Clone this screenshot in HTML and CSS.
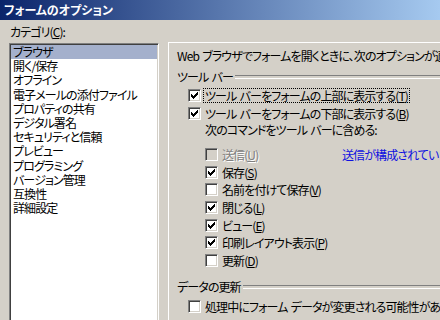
FILE: index.html
```html
<!DOCTYPE html>
<html lang="ja">
<head>
<meta charset="utf-8">
<title>フォームのオプション</title>
<link rel="stylesheet" href="styles.css">
</head>
<body>
<div class="titlebar">フォームのオプション</div>
<div class="main">
  <div class="left">
    <div class="label">カテゴリ(<u>C</u>):</div>
    <div class="list">
      <div class="item sel">ブラウザ</div>
      <div class="item">開く/保存</div>
      <div class="item">オフライン</div>
      <div class="item">電子メールの添付ファイル</div>
      <div class="item">プロパティの共有</div>
      <div class="item">デジタル署名</div>
      <div class="item">セキュリティと信頼</div>
      <div class="item">プレビュー</div>
      <div class="item">プログラミング</div>
      <div class="item">バージョン管理</div>
      <div class="item">互換性</div>
      <div class="item">詳細設定</div>
    </div>
  </div>
  <div class="panel">
    <div class="intro">Web ブラウザでフォームを開くときに、次のオプションが適用されます:</div>
    <div class="group g1"><span>ツール バー</span></div>
    <div class="opt top first">
      <span class="cb"><svg width="11" height="11" viewBox="0 0 11 11" shape-rendering="crispEdges"><path d="M2 4h1v3H2zM3 5h1v3H3zM4 6h1v3H4zM5 5h1v3H5zM6 4h1v3H6zM7 3h1v3H7zM8 2h1v3H8z" fill="#000"/></svg></span>
      <span class="focus">ツール バーをフォームの上部に表示する(<u>T</u>)</span>
    </div>
    <div class="opt top second">
      <span class="cb"><svg width="11" height="11" viewBox="0 0 11 11" shape-rendering="crispEdges"><path d="M2 4h1v3H2zM3 5h1v3H3zM4 6h1v3H4zM5 5h1v3H5zM6 4h1v3H6zM7 3h1v3H7zM8 2h1v3H8z" fill="#000"/></svg></span>
      <span class="txt">ツール バーをフォームの下部に表示する(<u>B</u>)</span>
    </div>
    <div class="sublabel">次のコマンドをツール バーに含める:</div>
    <div class="opt sub s1">
      <span class="optmain">
        <span class="cb disabled"></span>
        <span class="txt dis">送信(<u>U</u>)</span>
      </span>
      <span class="note">送信が構成されていません。</span>
    </div>
    <div class="opt sub">
      <span class="cb"><svg width="11" height="11" viewBox="0 0 11 11" shape-rendering="crispEdges"><path d="M2 4h1v3H2zM3 5h1v3H3zM4 6h1v3H4zM5 5h1v3H5zM6 4h1v3H6zM7 3h1v3H7zM8 2h1v3H8z" fill="#000"/></svg></span>
      <span class="txt">保存(<u>S</u>)</span>
    </div>
    <div class="opt sub">
      <span class="cb"></span>
      <span class="txt">名前を付けて保存(<u>V</u>)</span>
    </div>
    <div class="opt sub">
      <span class="cb"><svg width="11" height="11" viewBox="0 0 11 11" shape-rendering="crispEdges"><path d="M2 4h1v3H2zM3 5h1v3H3zM4 6h1v3H4zM5 5h1v3H5zM6 4h1v3H6zM7 3h1v3H7zM8 2h1v3H8z" fill="#000"/></svg></span>
      <span class="txt">閉じる(<u>L</u>)</span>
    </div>
    <div class="opt sub">
      <span class="cb"><svg width="11" height="11" viewBox="0 0 11 11" shape-rendering="crispEdges"><path d="M2 4h1v3H2zM3 5h1v3H3zM4 6h1v3H4zM5 5h1v3H5zM6 4h1v3H6zM7 3h1v3H7zM8 2h1v3H8z" fill="#000"/></svg></span>
      <span class="txt">ビュー(<u>E</u>)</span>
    </div>
    <div class="opt sub">
      <span class="cb"><svg width="11" height="11" viewBox="0 0 11 11" shape-rendering="crispEdges"><path d="M2 4h1v3H2zM3 5h1v3H3zM4 6h1v3H4zM5 5h1v3H5zM6 4h1v3H6zM7 3h1v3H7zM8 2h1v3H8z" fill="#000"/></svg></span>
      <span class="txt">印刷レイアウト表示(<u>P</u>)</span>
    </div>
    <div class="opt sub">
      <span class="cb"></span>
      <span class="txt">更新(<u>D</u>)</span>
    </div>
    <div class="group g2"><span>データの更新</span></div>
    <div class="opt top last">
      <span class="cb"></span>
      <span class="txt">処理中にフォーム データが変更される可能性がある場合に更新する(<u>R</u>)</span>
    </div>
  </div>
</div>
</body>
</html>
```

FILE: styles.css
```css
* {
  box-sizing: border-box;
  margin: 0;
  padding: 0;
}

html,
body {
  width: 440px;
  height: 320px;
  overflow: hidden;
}

body {
  background: #d4d0c8;
  color: #000;
  font-family: "Noto Sans CJK JP", "Noto Sans", sans-serif;
  font-size: 12px;
  line-height: 14px;
  letter-spacing: -0.9px;
  word-spacing: 1.5px;
  font-feature-settings: "palt";
}

u {
  text-decoration: underline;
  text-underline-offset: 1px;
}

.titlebar {
  height: 20px;
  padding: 3px 0 0 4px;
  background: linear-gradient(to right, #0a246a, #a6caf0);
  color: #fff;
  font-weight: bold;
  line-height: 14px;
  letter-spacing: 0;
  white-space: nowrap;
}

.main {
  display: flex;
  gap: 9px;
  padding-left: 9px;
}

.left {
  flex: none;
  width: 150px;
  padding-top: 5px;
}

.label {
  height: 18px;
  padding-left: 1px;
}

.list {
  height: 300px;
  padding: 1px 1px;
  background: #fff;
  border-top: 1px solid #808080;
  border-left: 1px solid #808080;
  border-right: 1px solid #fff;
  box-shadow: inset 1px 1px 0 #404040, inset -1px 0 0 #d4d0c8;
  white-space: nowrap;
}

.item {
  height: 14.2px;
  padding-left: 2px;
  line-height: 13px;
}

.item.sel {
  background: #a4b0cc;
}

.panel {
  flex: none;
  width: 320px;
  height: 300px;
  margin-top: 22px;
  padding: 6px 0 0 8px;
  border-top: 1px solid #fff;
  border-left: 1px solid #fff;
  white-space: nowrap;
}

.intro {
  height: 14px;
}

.group {
  display: flex;
  align-items: center;
  height: 14px;
}

.group::after {
  content: "";
  flex: 1;
  height: 2px;
  margin-left: 2px;
  border-top: 1px solid #808080;
  border-bottom: 1px solid #fff;
}

.g1 {
  margin-top: 7px;
}

.g2 {
  margin-top: 13px;
}

.opt {
  display: flex;
  align-items: center;
  height: 13px;
  line-height: 13px;
}

.opt.top {
  margin-left: 11px;
}

.opt.first {
  margin-top: 5px;
}

.opt.second {
  margin-top: 5px;
}

.opt.last {
  margin-top: 6px;
}

.opt.sub {
  margin-left: 28px;
  margin-top: 4.67px;
}

.opt.s1 {
  margin-top: 11px;
}

.optmain {
  display: flex;
  align-items: center;
  width: 137px;
  flex: none;
}

.sublabel {
  margin-top: 3px;
  margin-left: 28px;
  height: 14px;
}

.cb {
  flex: none;
  width: 13px;
  height: 13px;
  background: #fff;
  border-top: 1px solid #808080;
  border-left: 1px solid #808080;
  border-right: 1px solid #fff;
  border-bottom: 1px solid #fff;
  box-shadow: inset 1px 1px 0 #404040, inset -1px -1px 0 #d4d0c8;
}

.cb svg {
  display: block;
}

.cb.disabled {
  background: #d4d0c8;
}

.txt {
  margin-left: 4px;
}

.focus {
  margin-left: 2px;
  padding: 0 1px;
  border: 1px dotted #000;
  line-height: 13px;
}

.dis {
  color: #808080;
  text-shadow: 1px 1px 0 #fff;
}

.note {
  color: #1010e0;
}
```
